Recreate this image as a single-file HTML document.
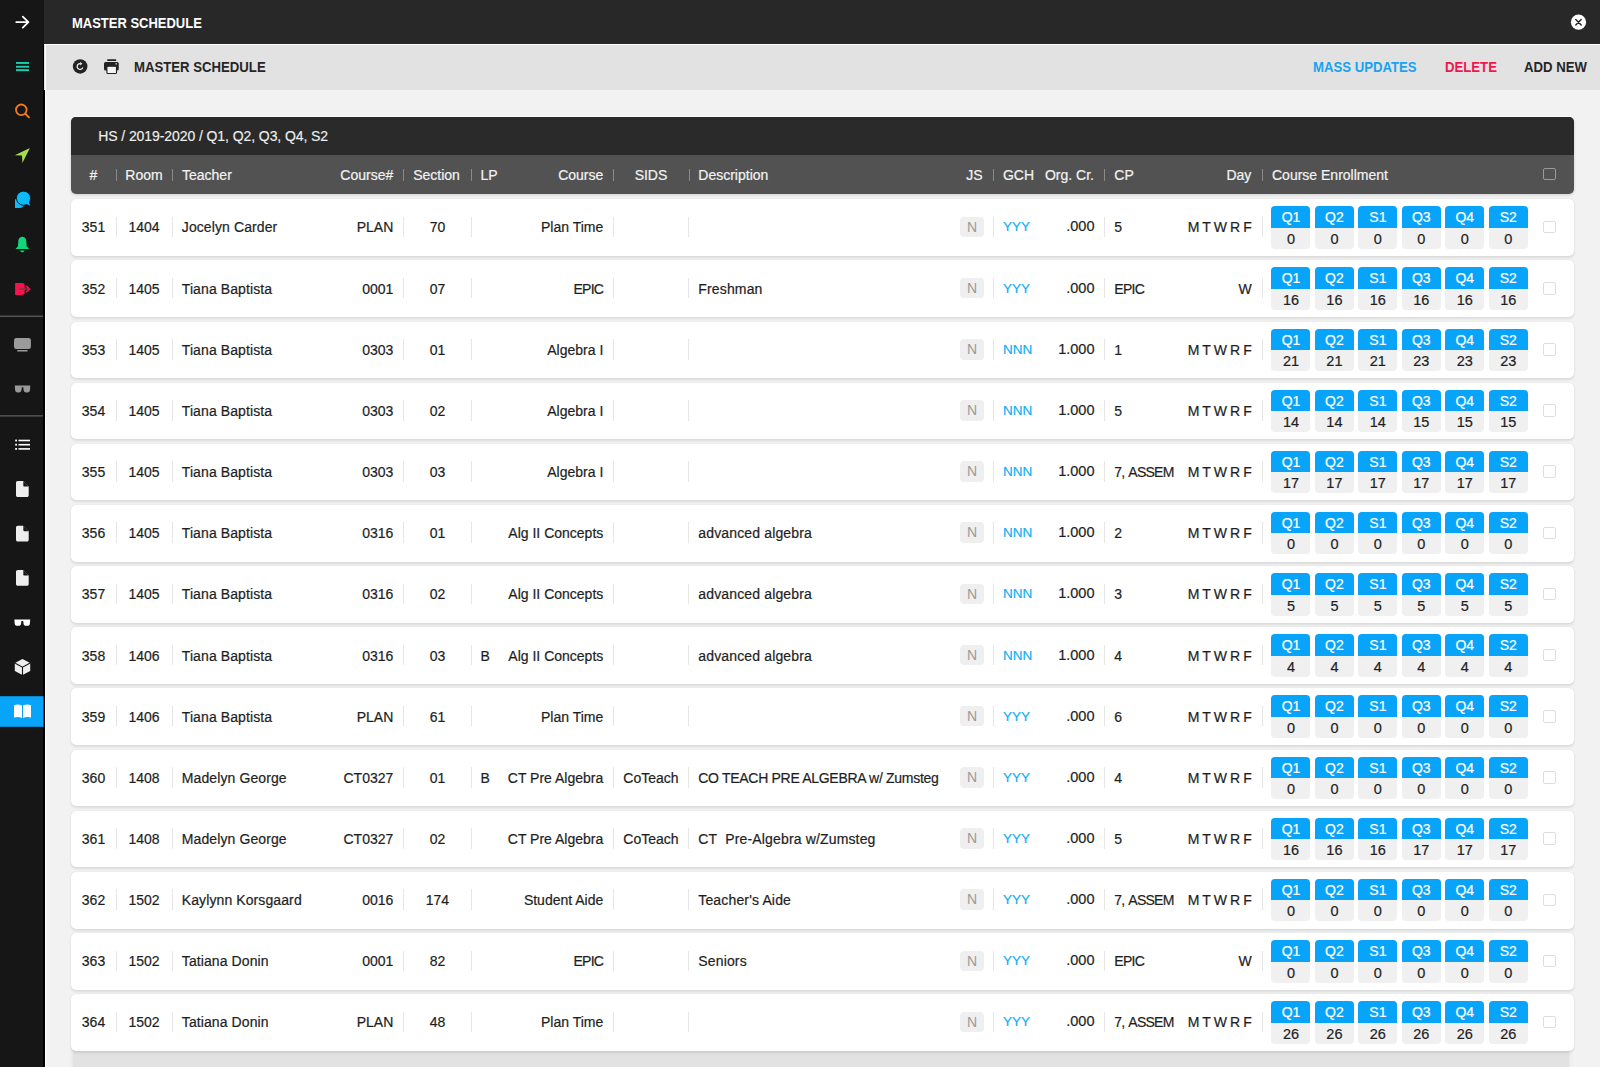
<!DOCTYPE html><html><head><meta charset="utf-8"><style>

*{margin:0;padding:0;box-sizing:border-box}
html,body{width:1600px;height:1067px;overflow:hidden;background:#f2f2f2;font-family:"Liberation Sans",sans-serif;color:#1e1e1e}
.abs{position:absolute}
#side{position:absolute;left:0;top:0;width:44px;height:1067px;background:#161616}
#side .ln{position:absolute;left:0;width:44px;height:1px;background:#5a5a5a}
#top{position:absolute;left:44px;top:0;width:1556px;height:44px;background:#282828}
#tool{position:absolute;left:44px;top:44px;width:1556px;height:45.5px;background:#e2e2e2;border-top:1px solid #fff}
#edge{position:absolute;left:43px;top:44px;width:1.5px;height:1023px;background:#000}
#edge2{position:absolute;left:45px;top:44px;width:1px;height:1023px;background:#fff;z-index:5}
.t1{position:absolute;left:71.5px;top:13.5px;font-size:14.2px;font-weight:700;color:#fff;line-height:18px;transform-origin:0 50%;transform:scaleX(.915);white-space:nowrap}
.t2{position:absolute;font-size:14.4px;font-weight:700;line-height:18px;top:58px;transform-origin:0 50%;transform:scaleX(.915);white-space:nowrap}
#tbl{position:absolute;left:71.2px;top:116.8px;width:1502.6px;height:77.4px;border-radius:5px;overflow:hidden;background:#525252;box-shadow:0 1px 3px rgba(0,0,0,.15),0 -1px 0 #fff}
#ttl{position:absolute;left:0;top:0;width:100%;height:38.4px;background:#2a2a2a}
#ttl span{position:absolute;left:27px;top:11.5px;font-size:14px;color:#eeeeee;line-height:16px;letter-spacing:-0.08px;-webkit-text-stroke:0.15px currentColor}
.h{position:absolute;top:50px;font-size:14px;line-height:16px;color:#f2f2f2;white-space:nowrap;-webkit-text-stroke:0.2px currentColor}
.hs{position:absolute;top:52.7px;width:1px;height:11.3px;background:#8a8a8a}
.row{position:absolute;left:71.2px;width:1502.6px;height:56.7px;background:#fff;border-radius:5px;box-shadow:0 1.5px 2.5px rgba(0,0,0,.09),0 0 1px rgba(0,0,0,.12)}
.c{position:absolute;top:20.3px;font-size:14px;line-height:16px;white-space:nowrap;-webkit-text-stroke:0.2px currentColor}
.s{position:absolute;top:17.5px;width:1px;height:20.5px;background:#e6e6e6}
.r{text-align:right}
.nb{position:absolute;left:889.3px;top:17.5px;width:23.3px;height:20.5px;background:#efefef;border-radius:4px;color:#9a9a9a;font-size:14px;text-align:center;line-height:21px}
.q{position:absolute;top:7px;width:39px;height:42.5px;border-radius:4px;overflow:hidden;background:#f0f0f0;text-align:center}
.q b{display:block;height:21.5px;background:#08a4f9;color:#fff;font-weight:400;font-size:14px;line-height:23px;-webkit-text-stroke:0.2px #fff}
.q i{display:block;font-style:normal;font-size:14.5px;line-height:22.6px;color:#1e1e1e;-webkit-text-stroke:0.2px #1e1e1e}
.cb{position:absolute;left:1472px;top:21.7px;width:12.5px;height:12.5px;border:1px solid #dedede;border-radius:2px}
.blue{color:#10aef4}
.gch{font-size:13.5px}
.org{font-size:14.5px;top:19.3px}
.day{word-spacing:-0.8px}
.up{letter-spacing:-0.3px}
.lo{letter-spacing:0.15px}
.tn{letter-spacing:0.1px}
.cpa{letter-spacing:-0.75px;word-spacing:1.5px}
.ep{letter-spacing:-0.7px}

</style></head><body>
<div id="side"></div><div id="edge"></div><div id="edge2"></div>
<svg class="abs" style="left:0;top:0" width="44" height="1067" viewBox="0 0 44 1067">
<path d="M16.2 22.1H28.4M22.8 16.6L28.4 22.1L22.8 27.6" fill="none" stroke="#fff" stroke-width="1.8" stroke-linecap="round" stroke-linejoin="round"/>
<g fill="#15d1b2"><rect x="16" y="62" width="13" height="1.9"/><rect x="16" y="65.8" width="13" height="1.9"/><rect x="16" y="69.2" width="13" height="1.9"/></g>
<circle cx="21.3" cy="109.8" r="5.3" fill="none" stroke="#f07c22" stroke-width="1.8"/>
<path d="M25.3 113.8L29 117.4" stroke="#f07c22" stroke-width="1.9" stroke-linecap="round"/>
<path d="M29.9 148L14.8 155.2L22 155.6L22.4 163Z" fill="#a7dc4c"/>
<path d="M15 199.2H19.6A4.4 4.4 0 0 1 24 203.6A4.4 4.4 0 0 1 19.6 208H15Z" fill="#0bbcfc"/>
<circle cx="23.5" cy="198.2" r="7.05" fill="#0bbcfc" stroke="#161616" stroke-width="0.9"/>
<path d="M25.8 203.6L29.9 205.7L28.9 201.2Z" fill="#0bbcfc"/>
<g fill="#13d67a"><path d="M22.3 236.8C19.6 236.8 18.2 239 18.2 242.3L18 246.3L15.5 249.1H29.2L26.6 246.3L26.4 242.3C26.4 239 25 236.8 22.3 236.8Z"/><path d="M20 250.4H24.6C24.2 251.6 23.3 252.2 22.3 252.2C21.3 252.2 20.4 251.6 20 250.4Z"/></g>
<path d="M15.1 283H22.4C23.7 283 24.7 284 24.7 285.3V292.6C24.7 293.9 23.7 294.9 22.4 294.9H15.1Z" fill="#f5134f"/>
<path d="M19.4 289H28.6" stroke="#7e3a30" stroke-width="1.6"/>
<path d="M26.2 285.9L29.4 289L26.2 292.1" fill="none" stroke="#f5134f" stroke-width="1.7"/>
<rect x="0" y="315.6" width="43" height="1.3" fill="#5c5c5c"/>
<rect x="14" y="338" width="16.9" height="11" rx="2.2" fill="#9b9b9b"/>
<rect x="17.3" y="350" width="10.2" height="1.5" fill="#9b9b9b"/>
<path d="M14.8 385.6H30.3L30 390C29.9 391.7 29 392.4 27.3 392.4H26.2C24.6 392.4 23.8 391.7 23.6 390L23.3 387.2H21.8L21.5 390C21.3 391.7 20.5 392.4 18.9 392.4H17.8C16.1 392.4 15.2 391.7 15.1 390Z" fill="#999"/>
<rect x="0" y="415.2" width="43" height="1.3" fill="#5c5c5c"/>
<g fill="#fff"><rect x="15.2" y="439.6" width="1.8" height="1.8"/><rect x="18.5" y="439.7" width="11.5" height="1.6"/><rect x="15.2" y="443.8" width="1.8" height="1.8"/><rect x="18.5" y="443.9" width="11.5" height="1.6"/><rect x="15.2" y="448" width="1.8" height="1.8"/><rect x="18.5" y="448.1" width="11.5" height="1.6"/></g>
<g fill="#eeeeee">
<path d="M17.8 481H23.2L28.7 486.6V495.2C28.7 496.2 27.9 497 26.9 497H17.8C16.8 497 16 496.2 16 495.2V482.8C16 481.8 16.8 481 17.8 481Z"/>
<path d="M17.8 525.7H23.2L28.7 531.3V539.8C28.7 540.8 27.9 541.6 26.9 541.6H17.8C16.8 541.6 16 540.8 16 539.8V527.5C16 526.5 16.8 525.7 17.8 525.7Z"/>
<path d="M17.8 570H23.2L28.7 575.6V584C28.7 585 27.9 585.8 26.9 585.8H17.8C16.8 585.8 16 585 16 584V571.8C16 570.8 16.8 570 17.8 570Z"/>
</g>
<g fill="#161616"><path d="M23.3 481V485.4C23.3 486 23.7 486.5 24.4 486.5H28.7Z"/><path d="M23.3 525.7V530.1C23.3 530.7 23.7 531.2 24.4 531.2H28.7Z"/><path d="M23.3 570V574.4C23.3 575 23.7 575.5 24.4 575.5H28.7Z"/></g>
<path d="M14.4 619.6H30.2L29.9 623.5C29.8 625.1 28.9 625.8 27.3 625.8H26.1C24.5 625.8 23.7 625.1 23.5 623.5L23.2 621H21.4L21.1 623.5C20.9 625.1 20.1 625.8 18.5 625.8H17.3C15.7 625.8 14.8 625.1 14.7 623.5Z" fill="#fff"/>
<path d="M22.5 659L30.2 663V671L22.5 675L14.8 671V663Z" fill="#eee"/>
<path d="M14.8 663L22.5 667.2L30.2 663M22.5 667.2V675" fill="none" stroke="#161616" stroke-width="1.1"/>
<rect x="0" y="696.2" width="43.5" height="30.6" fill="#08a4f9"/>
<path d="M14 705.2C16.7 704.1 19.7 704.3 22 705.6V718C19.7 716.8 16.7 716.6 14 717.6Z M31 705.2C28.3 704.1 25.3 704.3 23 705.6V718C25.3 716.8 28.3 716.6 31 717.6Z" fill="#fff"/>
</svg>
<div id="top"><div class="t1" style="left:27.5px">MASTER SCHEDULE</div></div>
<div id="tool"></div>
<svg class="abs" style="left:0;top:0" width="1600" height="100" viewBox="0 0 1600 100">
<circle cx="80.15" cy="66.45" r="7.3" fill="#232323"/>
<path d="M82.8 67.5A2.9 2.9 0 1 1 80.4 63.6" fill="none" stroke="#eee" stroke-width="1.2"/>
<path d="M80.2 61.8L82.3 63.8L80.2 65.6Z" fill="#eee"/>
<rect x="107.2" y="59.2" width="9" height="1.8" rx="0.6" fill="#232323"/>
<rect x="104" y="62" width="14.75" height="8.5" rx="1.6" fill="#232323"/>
<rect x="106.9" y="66.3" width="9.6" height="7.2" rx="1" fill="#f4f4f4" stroke="#232323" stroke-width="1.1"/>
<rect x="115.6" y="63.2" width="1.3" height="1.3" fill="#e2e2e2"/>
<circle cx="1578.5" cy="22.2" r="7.6" fill="#fff"/>
<path d="M1575.8 19.5L1581.2 24.9M1581.2 19.5L1575.8 24.9" stroke="#232323" stroke-width="1.4" stroke-linecap="round"/>
</svg>
<div class="t2" style="left:134px;color:#262626">MASTER SCHEDULE</div>
<div class="t2" style="left:1313px;color:#1aa3ef">MASS UPDATES</div>
<div class="t2" style="left:1445px;color:#f0174f">DELETE</div>
<div class="t2" style="left:1523.5px;color:#262626">ADD NEW</div>
<div id="tbl"><div id="ttl"><span>HS / 2019-2020 / Q1, Q2, Q3, Q4, S2</span></div>
<div class="h" style="left:-77.7px;width:200px;text-align:center">#</div>
<div class="h" style="left:-27.200000000000003px;width:200px;text-align:center">Room</div>
<div class="h" style="left:110.8px">Teacher</div>
<div class="h" style="right:1180.5px">Course#</div>
<div class="h" style="left:265.3px;width:200px;text-align:center">Section</div>
<div class="h" style="left:409.3px">LP</div>
<div class="h" style="right:970.5px">Course</div>
<div class="h" style="left:479.79999999999995px;width:200px;text-align:center">SIDS</div>
<div class="h" style="left:627.0999999999999px">Description</div>
<div class="h" style="right:591.3px">JS</div>
<div class="h" style="left:931.8px">GCH</div>
<div class="h" style="right:479.79999999999995px">Org. Cr.</div>
<div class="h" style="left:1043.1px">CP</div>
<div class="h" style="right:322.5px">Day</div>
<div class="h" style="left:1200.8px">Course Enrollment</div>
<div class="hs" style="left:45.3px"></div>
<div class="hs" style="left:100.8px"></div>
<div class="hs" style="left:331.8px"></div>
<div class="hs" style="left:399.8px"></div>
<div class="hs" style="left:542.0999999999999px"></div>
<div class="hs" style="left:617.5999999999999px"></div>
<div class="hs" style="left:922.0999999999999px"></div>
<div class="hs" style="left:1033.3px"></div>
<div class="hs" style="left:1190.8px"></div>
<div class="cb" style="top:51px;border-color:#9a9a9a"></div>
</div>
<div class="abs" style="left:73px;top:1050px;width:1496px;height:20px;background:#e2e2e2;box-shadow:0 0 3px 1px #e4e4e4"></div>
<div class="row" style="top:199.20px"><div class="c " style="left:-77.7px;width:200px;text-align:center">351</div><div class="c " style="left:-27.200000000000003px;width:200px;text-align:center">1404</div><div class="c tn" style="left:110.60000000000001px">Jocelyn Carder</div><div class="c " style="right:1180.5px">PLAN</div><div class="c " style="left:266.3px;width:200px;text-align:center">70</div><div class="c " style="right:970.5px">Plan Time</div><div class="nb">N</div><div class="c blue gch" style="left:931.8px">YYY</div><div class="c org" style="right:479.29999999999995px">.000</div><div class="c " style="left:1043.1px">5</div><div class="c day" style="right:322.0px">M T W R F</div><div class="s" style="left:45.3px"></div><div class="s" style="left:100.8px"></div><div class="s" style="left:331.8px"></div><div class="s" style="left:399.8px"></div><div class="s" style="left:541.8px"></div><div class="s" style="left:617.1999999999999px"></div><div class="s" style="left:922.0px"></div><div class="s" style="left:1033.3px"></div><div class="s" style="left:1191.0px"></div><div class="q" style="left:1200.30px"><b>Q1</b><i>0</i></div><div class="q" style="left:1243.75px"><b>Q2</b><i>0</i></div><div class="q" style="left:1287.20px"><b>S1</b><i>0</i></div><div class="q" style="left:1330.65px"><b>Q3</b><i>0</i></div><div class="q" style="left:1374.10px"><b>Q4</b><i>0</i></div><div class="q" style="left:1417.55px"><b>S2</b><i>0</i></div><div class="cb"></div></div>
<div class="row" style="top:260.35px"><div class="c " style="left:-77.7px;width:200px;text-align:center">352</div><div class="c " style="left:-27.200000000000003px;width:200px;text-align:center">1405</div><div class="c tn" style="left:110.60000000000001px">Tiana Baptista</div><div class="c " style="right:1180.5px">0001</div><div class="c " style="left:266.3px;width:200px;text-align:center">07</div><div class="c ep" style="right:970.5px">EPIC</div><div class="c lo" style="left:627.0999999999999px">Freshman</div><div class="nb">N</div><div class="c blue gch" style="left:931.8px">YYY</div><div class="c org" style="right:479.29999999999995px">.000</div><div class="c ep" style="left:1043.1px">EPIC</div><div class="c day" style="right:322.0px">W</div><div class="s" style="left:45.3px"></div><div class="s" style="left:100.8px"></div><div class="s" style="left:331.8px"></div><div class="s" style="left:399.8px"></div><div class="s" style="left:541.8px"></div><div class="s" style="left:617.1999999999999px"></div><div class="s" style="left:922.0px"></div><div class="s" style="left:1033.3px"></div><div class="s" style="left:1191.0px"></div><div class="q" style="left:1200.30px"><b>Q1</b><i>16</i></div><div class="q" style="left:1243.75px"><b>Q2</b><i>16</i></div><div class="q" style="left:1287.20px"><b>S1</b><i>16</i></div><div class="q" style="left:1330.65px"><b>Q3</b><i>16</i></div><div class="q" style="left:1374.10px"><b>Q4</b><i>16</i></div><div class="q" style="left:1417.55px"><b>S2</b><i>16</i></div><div class="cb"></div></div>
<div class="row" style="top:321.50px"><div class="c " style="left:-77.7px;width:200px;text-align:center">353</div><div class="c " style="left:-27.200000000000003px;width:200px;text-align:center">1405</div><div class="c tn" style="left:110.60000000000001px">Tiana Baptista</div><div class="c " style="right:1180.5px">0303</div><div class="c " style="left:266.3px;width:200px;text-align:center">01</div><div class="c " style="right:970.5px">Algebra I</div><div class="nb">N</div><div class="c blue gch" style="left:931.8px">NNN</div><div class="c org" style="right:479.29999999999995px">1.000</div><div class="c " style="left:1043.1px">1</div><div class="c day" style="right:322.0px">M T W R F</div><div class="s" style="left:45.3px"></div><div class="s" style="left:100.8px"></div><div class="s" style="left:331.8px"></div><div class="s" style="left:399.8px"></div><div class="s" style="left:541.8px"></div><div class="s" style="left:617.1999999999999px"></div><div class="s" style="left:922.0px"></div><div class="s" style="left:1033.3px"></div><div class="s" style="left:1191.0px"></div><div class="q" style="left:1200.30px"><b>Q1</b><i>21</i></div><div class="q" style="left:1243.75px"><b>Q2</b><i>21</i></div><div class="q" style="left:1287.20px"><b>S1</b><i>21</i></div><div class="q" style="left:1330.65px"><b>Q3</b><i>23</i></div><div class="q" style="left:1374.10px"><b>Q4</b><i>23</i></div><div class="q" style="left:1417.55px"><b>S2</b><i>23</i></div><div class="cb"></div></div>
<div class="row" style="top:382.65px"><div class="c " style="left:-77.7px;width:200px;text-align:center">354</div><div class="c " style="left:-27.200000000000003px;width:200px;text-align:center">1405</div><div class="c tn" style="left:110.60000000000001px">Tiana Baptista</div><div class="c " style="right:1180.5px">0303</div><div class="c " style="left:266.3px;width:200px;text-align:center">02</div><div class="c " style="right:970.5px">Algebra I</div><div class="nb">N</div><div class="c blue gch" style="left:931.8px">NNN</div><div class="c org" style="right:479.29999999999995px">1.000</div><div class="c " style="left:1043.1px">5</div><div class="c day" style="right:322.0px">M T W R F</div><div class="s" style="left:45.3px"></div><div class="s" style="left:100.8px"></div><div class="s" style="left:331.8px"></div><div class="s" style="left:399.8px"></div><div class="s" style="left:541.8px"></div><div class="s" style="left:617.1999999999999px"></div><div class="s" style="left:922.0px"></div><div class="s" style="left:1033.3px"></div><div class="s" style="left:1191.0px"></div><div class="q" style="left:1200.30px"><b>Q1</b><i>14</i></div><div class="q" style="left:1243.75px"><b>Q2</b><i>14</i></div><div class="q" style="left:1287.20px"><b>S1</b><i>14</i></div><div class="q" style="left:1330.65px"><b>Q3</b><i>15</i></div><div class="q" style="left:1374.10px"><b>Q4</b><i>15</i></div><div class="q" style="left:1417.55px"><b>S2</b><i>15</i></div><div class="cb"></div></div>
<div class="row" style="top:443.80px"><div class="c " style="left:-77.7px;width:200px;text-align:center">355</div><div class="c " style="left:-27.200000000000003px;width:200px;text-align:center">1405</div><div class="c tn" style="left:110.60000000000001px">Tiana Baptista</div><div class="c " style="right:1180.5px">0303</div><div class="c " style="left:266.3px;width:200px;text-align:center">03</div><div class="c " style="right:970.5px">Algebra I</div><div class="nb">N</div><div class="c blue gch" style="left:931.8px">NNN</div><div class="c org" style="right:479.29999999999995px">1.000</div><div class="c cpa" style="left:1043.1px">7, ASSEM</div><div class="c day" style="right:322.0px">M T W R F</div><div class="s" style="left:45.3px"></div><div class="s" style="left:100.8px"></div><div class="s" style="left:331.8px"></div><div class="s" style="left:399.8px"></div><div class="s" style="left:541.8px"></div><div class="s" style="left:617.1999999999999px"></div><div class="s" style="left:922.0px"></div><div class="s" style="left:1033.3px"></div><div class="s" style="left:1191.0px"></div><div class="q" style="left:1200.30px"><b>Q1</b><i>17</i></div><div class="q" style="left:1243.75px"><b>Q2</b><i>17</i></div><div class="q" style="left:1287.20px"><b>S1</b><i>17</i></div><div class="q" style="left:1330.65px"><b>Q3</b><i>17</i></div><div class="q" style="left:1374.10px"><b>Q4</b><i>17</i></div><div class="q" style="left:1417.55px"><b>S2</b><i>17</i></div><div class="cb"></div></div>
<div class="row" style="top:504.95px"><div class="c " style="left:-77.7px;width:200px;text-align:center">356</div><div class="c " style="left:-27.200000000000003px;width:200px;text-align:center">1405</div><div class="c tn" style="left:110.60000000000001px">Tiana Baptista</div><div class="c " style="right:1180.5px">0316</div><div class="c " style="left:266.3px;width:200px;text-align:center">01</div><div class="c " style="right:970.5px">Alg II Concepts</div><div class="c lo" style="left:627.0999999999999px">advanced algebra</div><div class="nb">N</div><div class="c blue gch" style="left:931.8px">NNN</div><div class="c org" style="right:479.29999999999995px">1.000</div><div class="c " style="left:1043.1px">2</div><div class="c day" style="right:322.0px">M T W R F</div><div class="s" style="left:45.3px"></div><div class="s" style="left:100.8px"></div><div class="s" style="left:331.8px"></div><div class="s" style="left:399.8px"></div><div class="s" style="left:541.8px"></div><div class="s" style="left:617.1999999999999px"></div><div class="s" style="left:922.0px"></div><div class="s" style="left:1033.3px"></div><div class="s" style="left:1191.0px"></div><div class="q" style="left:1200.30px"><b>Q1</b><i>0</i></div><div class="q" style="left:1243.75px"><b>Q2</b><i>0</i></div><div class="q" style="left:1287.20px"><b>S1</b><i>0</i></div><div class="q" style="left:1330.65px"><b>Q3</b><i>0</i></div><div class="q" style="left:1374.10px"><b>Q4</b><i>0</i></div><div class="q" style="left:1417.55px"><b>S2</b><i>0</i></div><div class="cb"></div></div>
<div class="row" style="top:566.10px"><div class="c " style="left:-77.7px;width:200px;text-align:center">357</div><div class="c " style="left:-27.200000000000003px;width:200px;text-align:center">1405</div><div class="c tn" style="left:110.60000000000001px">Tiana Baptista</div><div class="c " style="right:1180.5px">0316</div><div class="c " style="left:266.3px;width:200px;text-align:center">02</div><div class="c " style="right:970.5px">Alg II Concepts</div><div class="c lo" style="left:627.0999999999999px">advanced algebra</div><div class="nb">N</div><div class="c blue gch" style="left:931.8px">NNN</div><div class="c org" style="right:479.29999999999995px">1.000</div><div class="c " style="left:1043.1px">3</div><div class="c day" style="right:322.0px">M T W R F</div><div class="s" style="left:45.3px"></div><div class="s" style="left:100.8px"></div><div class="s" style="left:331.8px"></div><div class="s" style="left:399.8px"></div><div class="s" style="left:541.8px"></div><div class="s" style="left:617.1999999999999px"></div><div class="s" style="left:922.0px"></div><div class="s" style="left:1033.3px"></div><div class="s" style="left:1191.0px"></div><div class="q" style="left:1200.30px"><b>Q1</b><i>5</i></div><div class="q" style="left:1243.75px"><b>Q2</b><i>5</i></div><div class="q" style="left:1287.20px"><b>S1</b><i>5</i></div><div class="q" style="left:1330.65px"><b>Q3</b><i>5</i></div><div class="q" style="left:1374.10px"><b>Q4</b><i>5</i></div><div class="q" style="left:1417.55px"><b>S2</b><i>5</i></div><div class="cb"></div></div>
<div class="row" style="top:627.25px"><div class="c " style="left:-77.7px;width:200px;text-align:center">358</div><div class="c " style="left:-27.200000000000003px;width:200px;text-align:center">1406</div><div class="c tn" style="left:110.60000000000001px">Tiana Baptista</div><div class="c " style="right:1180.5px">0316</div><div class="c " style="left:266.3px;width:200px;text-align:center">03</div><div class="c " style="left:409.3px">B</div><div class="c " style="right:970.5px">Alg II Concepts</div><div class="c lo" style="left:627.0999999999999px">advanced algebra</div><div class="nb">N</div><div class="c blue gch" style="left:931.8px">NNN</div><div class="c org" style="right:479.29999999999995px">1.000</div><div class="c " style="left:1043.1px">4</div><div class="c day" style="right:322.0px">M T W R F</div><div class="s" style="left:45.3px"></div><div class="s" style="left:100.8px"></div><div class="s" style="left:331.8px"></div><div class="s" style="left:399.8px"></div><div class="s" style="left:541.8px"></div><div class="s" style="left:617.1999999999999px"></div><div class="s" style="left:922.0px"></div><div class="s" style="left:1033.3px"></div><div class="s" style="left:1191.0px"></div><div class="q" style="left:1200.30px"><b>Q1</b><i>4</i></div><div class="q" style="left:1243.75px"><b>Q2</b><i>4</i></div><div class="q" style="left:1287.20px"><b>S1</b><i>4</i></div><div class="q" style="left:1330.65px"><b>Q3</b><i>4</i></div><div class="q" style="left:1374.10px"><b>Q4</b><i>4</i></div><div class="q" style="left:1417.55px"><b>S2</b><i>4</i></div><div class="cb"></div></div>
<div class="row" style="top:688.40px"><div class="c " style="left:-77.7px;width:200px;text-align:center">359</div><div class="c " style="left:-27.200000000000003px;width:200px;text-align:center">1406</div><div class="c tn" style="left:110.60000000000001px">Tiana Baptista</div><div class="c " style="right:1180.5px">PLAN</div><div class="c " style="left:266.3px;width:200px;text-align:center">61</div><div class="c " style="right:970.5px">Plan Time</div><div class="nb">N</div><div class="c blue gch" style="left:931.8px">YYY</div><div class="c org" style="right:479.29999999999995px">.000</div><div class="c " style="left:1043.1px">6</div><div class="c day" style="right:322.0px">M T W R F</div><div class="s" style="left:45.3px"></div><div class="s" style="left:100.8px"></div><div class="s" style="left:331.8px"></div><div class="s" style="left:399.8px"></div><div class="s" style="left:541.8px"></div><div class="s" style="left:617.1999999999999px"></div><div class="s" style="left:922.0px"></div><div class="s" style="left:1033.3px"></div><div class="s" style="left:1191.0px"></div><div class="q" style="left:1200.30px"><b>Q1</b><i>0</i></div><div class="q" style="left:1243.75px"><b>Q2</b><i>0</i></div><div class="q" style="left:1287.20px"><b>S1</b><i>0</i></div><div class="q" style="left:1330.65px"><b>Q3</b><i>0</i></div><div class="q" style="left:1374.10px"><b>Q4</b><i>0</i></div><div class="q" style="left:1417.55px"><b>S2</b><i>0</i></div><div class="cb"></div></div>
<div class="row" style="top:749.55px"><div class="c " style="left:-77.7px;width:200px;text-align:center">360</div><div class="c " style="left:-27.200000000000003px;width:200px;text-align:center">1408</div><div class="c tn" style="left:110.60000000000001px">Madelyn George</div><div class="c " style="right:1180.5px">CT0327</div><div class="c " style="left:266.3px;width:200px;text-align:center">01</div><div class="c " style="left:409.3px">B</div><div class="c " style="right:970.5px">CT Pre Algebra</div><div class="c " style="left:479.79999999999995px;width:200px;text-align:center">CoTeach</div><div class="c up" style="left:627.0999999999999px">CO TEACH PRE ALGEBRA w/ Zumsteg</div><div class="nb">N</div><div class="c blue gch" style="left:931.8px">YYY</div><div class="c org" style="right:479.29999999999995px">.000</div><div class="c " style="left:1043.1px">4</div><div class="c day" style="right:322.0px">M T W R F</div><div class="s" style="left:45.3px"></div><div class="s" style="left:100.8px"></div><div class="s" style="left:331.8px"></div><div class="s" style="left:399.8px"></div><div class="s" style="left:541.8px"></div><div class="s" style="left:617.1999999999999px"></div><div class="s" style="left:922.0px"></div><div class="s" style="left:1033.3px"></div><div class="s" style="left:1191.0px"></div><div class="q" style="left:1200.30px"><b>Q1</b><i>0</i></div><div class="q" style="left:1243.75px"><b>Q2</b><i>0</i></div><div class="q" style="left:1287.20px"><b>S1</b><i>0</i></div><div class="q" style="left:1330.65px"><b>Q3</b><i>0</i></div><div class="q" style="left:1374.10px"><b>Q4</b><i>0</i></div><div class="q" style="left:1417.55px"><b>S2</b><i>0</i></div><div class="cb"></div></div>
<div class="row" style="top:810.70px"><div class="c " style="left:-77.7px;width:200px;text-align:center">361</div><div class="c " style="left:-27.200000000000003px;width:200px;text-align:center">1408</div><div class="c tn" style="left:110.60000000000001px">Madelyn George</div><div class="c " style="right:1180.5px">CT0327</div><div class="c " style="left:266.3px;width:200px;text-align:center">02</div><div class="c " style="right:970.5px">CT Pre Algebra</div><div class="c " style="left:479.79999999999995px;width:200px;text-align:center">CoTeach</div><div class="c lo" style="left:627.0999999999999px">CT&nbsp; Pre-Algebra w/Zumsteg</div><div class="nb">N</div><div class="c blue gch" style="left:931.8px">YYY</div><div class="c org" style="right:479.29999999999995px">.000</div><div class="c " style="left:1043.1px">5</div><div class="c day" style="right:322.0px">M T W R F</div><div class="s" style="left:45.3px"></div><div class="s" style="left:100.8px"></div><div class="s" style="left:331.8px"></div><div class="s" style="left:399.8px"></div><div class="s" style="left:541.8px"></div><div class="s" style="left:617.1999999999999px"></div><div class="s" style="left:922.0px"></div><div class="s" style="left:1033.3px"></div><div class="s" style="left:1191.0px"></div><div class="q" style="left:1200.30px"><b>Q1</b><i>16</i></div><div class="q" style="left:1243.75px"><b>Q2</b><i>16</i></div><div class="q" style="left:1287.20px"><b>S1</b><i>16</i></div><div class="q" style="left:1330.65px"><b>Q3</b><i>17</i></div><div class="q" style="left:1374.10px"><b>Q4</b><i>17</i></div><div class="q" style="left:1417.55px"><b>S2</b><i>17</i></div><div class="cb"></div></div>
<div class="row" style="top:871.85px"><div class="c " style="left:-77.7px;width:200px;text-align:center">362</div><div class="c " style="left:-27.200000000000003px;width:200px;text-align:center">1502</div><div class="c tn" style="left:110.60000000000001px">Kaylynn Korsgaard</div><div class="c " style="right:1180.5px">0016</div><div class="c " style="left:266.3px;width:200px;text-align:center">174</div><div class="c " style="right:970.5px">Student Aide</div><div class="c lo" style="left:627.0999999999999px">Teacher's Aide</div><div class="nb">N</div><div class="c blue gch" style="left:931.8px">YYY</div><div class="c org" style="right:479.29999999999995px">.000</div><div class="c cpa" style="left:1043.1px">7, ASSEM</div><div class="c day" style="right:322.0px">M T W R F</div><div class="s" style="left:45.3px"></div><div class="s" style="left:100.8px"></div><div class="s" style="left:331.8px"></div><div class="s" style="left:399.8px"></div><div class="s" style="left:541.8px"></div><div class="s" style="left:617.1999999999999px"></div><div class="s" style="left:922.0px"></div><div class="s" style="left:1033.3px"></div><div class="s" style="left:1191.0px"></div><div class="q" style="left:1200.30px"><b>Q1</b><i>0</i></div><div class="q" style="left:1243.75px"><b>Q2</b><i>0</i></div><div class="q" style="left:1287.20px"><b>S1</b><i>0</i></div><div class="q" style="left:1330.65px"><b>Q3</b><i>0</i></div><div class="q" style="left:1374.10px"><b>Q4</b><i>0</i></div><div class="q" style="left:1417.55px"><b>S2</b><i>0</i></div><div class="cb"></div></div>
<div class="row" style="top:933.00px"><div class="c " style="left:-77.7px;width:200px;text-align:center">363</div><div class="c " style="left:-27.200000000000003px;width:200px;text-align:center">1502</div><div class="c tn" style="left:110.60000000000001px">Tatiana Donin</div><div class="c " style="right:1180.5px">0001</div><div class="c " style="left:266.3px;width:200px;text-align:center">82</div><div class="c ep" style="right:970.5px">EPIC</div><div class="c lo" style="left:627.0999999999999px">Seniors</div><div class="nb">N</div><div class="c blue gch" style="left:931.8px">YYY</div><div class="c org" style="right:479.29999999999995px">.000</div><div class="c ep" style="left:1043.1px">EPIC</div><div class="c day" style="right:322.0px">W</div><div class="s" style="left:45.3px"></div><div class="s" style="left:100.8px"></div><div class="s" style="left:331.8px"></div><div class="s" style="left:399.8px"></div><div class="s" style="left:541.8px"></div><div class="s" style="left:617.1999999999999px"></div><div class="s" style="left:922.0px"></div><div class="s" style="left:1033.3px"></div><div class="s" style="left:1191.0px"></div><div class="q" style="left:1200.30px"><b>Q1</b><i>0</i></div><div class="q" style="left:1243.75px"><b>Q2</b><i>0</i></div><div class="q" style="left:1287.20px"><b>S1</b><i>0</i></div><div class="q" style="left:1330.65px"><b>Q3</b><i>0</i></div><div class="q" style="left:1374.10px"><b>Q4</b><i>0</i></div><div class="q" style="left:1417.55px"><b>S2</b><i>0</i></div><div class="cb"></div></div>
<div class="row" style="top:994.15px"><div class="c " style="left:-77.7px;width:200px;text-align:center">364</div><div class="c " style="left:-27.200000000000003px;width:200px;text-align:center">1502</div><div class="c tn" style="left:110.60000000000001px">Tatiana Donin</div><div class="c " style="right:1180.5px">PLAN</div><div class="c " style="left:266.3px;width:200px;text-align:center">48</div><div class="c " style="right:970.5px">Plan Time</div><div class="nb">N</div><div class="c blue gch" style="left:931.8px">YYY</div><div class="c org" style="right:479.29999999999995px">.000</div><div class="c cpa" style="left:1043.1px">7, ASSEM</div><div class="c day" style="right:322.0px">M T W R F</div><div class="s" style="left:45.3px"></div><div class="s" style="left:100.8px"></div><div class="s" style="left:331.8px"></div><div class="s" style="left:399.8px"></div><div class="s" style="left:541.8px"></div><div class="s" style="left:617.1999999999999px"></div><div class="s" style="left:922.0px"></div><div class="s" style="left:1033.3px"></div><div class="s" style="left:1191.0px"></div><div class="q" style="left:1200.30px"><b>Q1</b><i>26</i></div><div class="q" style="left:1243.75px"><b>Q2</b><i>26</i></div><div class="q" style="left:1287.20px"><b>S1</b><i>26</i></div><div class="q" style="left:1330.65px"><b>Q3</b><i>26</i></div><div class="q" style="left:1374.10px"><b>Q4</b><i>26</i></div><div class="q" style="left:1417.55px"><b>S2</b><i>26</i></div><div class="cb"></div></div>
</body></html>
